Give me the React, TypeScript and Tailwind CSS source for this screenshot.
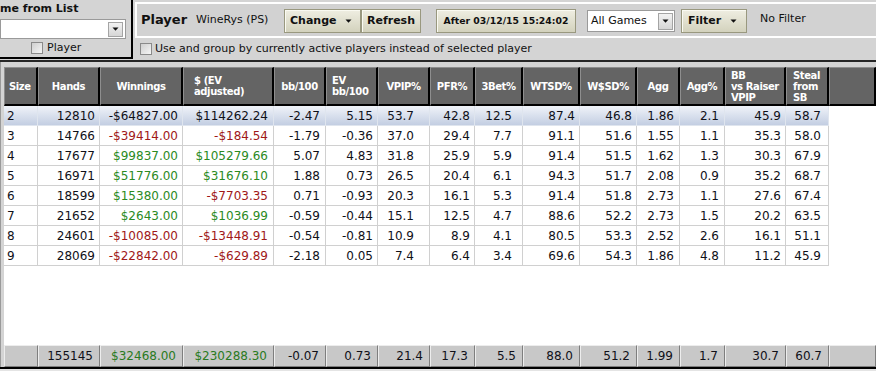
import React from "react";

const COLS =
  "grid grid-cols-[34px_62px_83px_91px_52px_52px_52px_45px_48px_57px_57px_43px_45px_61px_43px_1fr]";

type Cell = { t: string; c?: "r" | "g" };

const rows: string[][] = [
  ["2", "12810", "-$64827.00", "$114262.24", "-2.47", "5.15", "53.7", "42.8", "12.5", "87.4", "46.8", "1.86", "2.1", "45.9", "58.7"],
  ["3", "14766", "-$39414.00", "-$184.54", "-1.79", "-0.36", "37.0", "29.4", "7.7", "91.1", "51.6", "1.55", "1.1", "35.3", "58.0"],
  ["4", "17677", "$99837.00", "$105279.66", "5.07", "4.83", "31.8", "25.9", "5.9", "91.4", "51.5", "1.62", "1.3", "30.3", "67.9"],
  ["5", "16971", "$51776.00", "$31676.10", "1.88", "0.73", "26.5", "20.4", "6.1", "94.3", "51.7", "2.08", "0.9", "35.2", "68.7"],
  ["6", "18599", "$15380.00", "-$7703.35", "0.71", "-0.93", "20.3", "16.1", "5.3", "91.4", "51.8", "2.73", "1.1", "27.6", "67.4"],
  ["7", "21652", "$2643.00", "$1036.99", "-0.59", "-0.44", "15.1", "12.5", "4.7", "88.6", "52.2", "2.73", "1.5", "20.2", "63.5"],
  ["8", "24601", "-$10085.00", "-$13448.91", "-0.54", "-0.81", "10.9", "8.9", "4.1", "80.5", "53.3", "2.52", "2.6", "16.1", "51.1"],
  ["9", "28069", "-$22842.00", "-$629.89", "-2.18", "0.05", "7.4", "6.4", "3.4", "69.6", "54.3", "1.86", "4.8", "11.2", "45.9"],
];

const footer = ["", "155145", "$32468.00", "$230288.30", "-0.07", "0.73", "21.4", "17.3", "5.5", "88.0", "51.2", "1.99", "1.7", "30.7", "60.7"];

// right padding per data column
const dataPad = [
  "pl-[3px] justify-start",
  "pr-[4px] justify-end",
  "pr-[4px] justify-end",
  "pr-[5px] justify-end",
  "pr-[5px] justify-end",
  "pr-[4px] justify-end",
  "pr-[15px] justify-end",
  "pr-[4px] justify-end",
  "pr-[10px] justify-end",
  "pr-[4px] justify-end",
  "pr-[4px] justify-end",
  "pr-[5px] justify-end",
  "pr-[5px] justify-end",
  "pr-[4px] justify-end",
  "pr-[7px] justify-end",
];

function moneyColor(s: string, col: number): string {
  if (col !== 2 && col !== 3) return "text-[#101018]";
  return s.startsWith("-") ? "text-[#a01818]" : "text-[#2b8a1e]";
}

function Arrow() {
  return (
    <svg width="7" height="4" viewBox="0 0 7 4" className="block">
      <path d="M0.5 0.5h6L3.5 3.8z" fill="#111" />
    </svg>
  );
}

function Check() {
  return (
    <span className="inline-block w-[12px] h-[12px] border border-[#8a8a8a] bg-gradient-to-br from-[#cfcfcf] to-[#f6f6f6] shrink-0" />
  );
}

function Btn({ w, h, children, className = "" }: { w: string; h: string; children: React.ReactNode; className?: string }) {
  return (
    <div
      className={`${w} ${h} flex items-center border border-[#99987f] bg-gradient-to-b from-[#efeee2] to-[#d3d2bd] shadow-[inset_1px_1px_0_#fafaf2] text-[#111] font-bold ${className}`}
    >
      {children}
    </div>
  );
}

const headers: React.ReactNode[] = [
  "Size",
  "Hands",
  "Winnings",
  <>$ (EV<br />adjusted)</>,
  "bb/100",
  <>EV<br />bb/100</>,
  "VPIP%",
  "PFR%",
  "3Bet%",
  "WTSD%",
  "W$SD%",
  "Agg",
  "Agg%",
  <>BB<br />vs Raiser<br />VPIP</>,
  <>Steal<br />from<br />SB</>,
  "",
];

const headerAlign = [
  "justify-start pl-[4px]",
  "justify-center",
  "justify-center",
  "justify-start pl-[10px]",
  "justify-center",
  "justify-start pl-[5px]",
  "justify-center",
  "justify-center",
  "justify-center",
  "justify-center",
  "justify-center",
  "justify-center",
  "justify-center",
  "justify-start pl-[5px]",
  "justify-start pl-[6px]",
  "justify-center",
];

export default function App() {
  return (
    <div className="w-[876px] h-[371px] overflow-hidden bg-[#d4d4d4] [font-family:'DejaVu_Sans',Verdana,sans-serif] text-[#111] flex flex-col">
      {/* Top area */}
      <div className="h-[60px] flex shrink-0">
        {/* left panel */}
        <div className="w-[133px] h-[59px] border-r-2 border-b-2 border-black flex flex-col">
          <div className="h-[18px] pt-[2px] text-[11px] font-bold leading-[14px] whitespace-nowrap">me from List</div>
          <div className="h-[20px] w-[126px] mt-[1px] bg-white border border-[#9a9a9a] flex items-center justify-end pr-[2px]">
            <div className="w-[15px] h-[15px] bg-gradient-to-b from-[#f2f2f2] to-[#d6d6d6] border border-[#a4a4a4] flex items-center justify-center">
              <Arrow />
            </div>
          </div>
          <div className="flex-1 flex items-center pl-[31px] gap-[4px] text-[11px]">
            <Check />
            <span>Player</span>
          </div>
        </div>
        {/* right area */}
        <div className="flex-1 flex flex-col">
          <div className="mt-[2px] ml-[2px] h-[36px] border-t-2 border-l-2 border-b-2 border-white bg-[#d2d2d2] flex items-center pl-[4px] text-[11px]">
            <div className="w-[55px] text-[13px] font-bold">Player</div>
            <div className="w-[88px] whitespace-nowrap">WineRys (PS)</div>
            <Btn w="w-[77px]" h="h-[24px]" className="pl-[5px] pr-[8px] justify-between mt-[2px]">
              <span>Change</span>
              <Arrow />
            </Btn>
            <Btn w="w-[60px]" h="h-[24px]" className="justify-center mt-[2px]">
              <span>Refresh</span>
            </Btn>
            <Btn w="w-[140px]" h="h-[24px]" className="justify-center ml-[15px] text-[9.3px] mt-[2px]">
              <span>After 03/12/15 15:24:02</span>
            </Btn>
            <div className="ml-[11px] w-[88px] h-[22px] mt-[2px] bg-white border border-[#9a9a9a] flex items-center justify-between pl-[3px] pr-[1px]">
              <span>All Games</span>
              <div className="w-[15px] h-[17px] bg-gradient-to-b from-[#f2f2f2] to-[#d6d6d6] border border-[#a4a4a4] flex items-center justify-center">
                <Arrow />
              </div>
            </div>
            <Btn w="w-[66px]" h="h-[24px]" className="ml-[6px] pl-[6px] pr-[9px] justify-between mt-[2px]">
              <span>Filter</span>
              <Arrow />
            </Btn>
            <div className="ml-[13px] mb-[1px]">No Filter</div>
          </div>
          <div className="flex-1 flex items-center pl-[7px] gap-[3px] text-[11px]">
            <Check />
            <span>Use and group by currently active players instead of selected player</span>
          </div>
        </div>
      </div>
      <div className="h-[2px] bg-[#262626] shrink-0" />

      {/* Table */}
      <div className="flex-1 flex flex-col border-l border-[#9a9a9a] pl-[3px] pt-[5px] bg-[#d4d4d4]">
        {/* header */}
        <div className={`${COLS} h-[39px] shrink-0 bg-[#646464]`}>
          {headers.map((h, i) => (
            <div
              key={i}
              className={`flex items-center ${headerAlign[i]} border-t border-l border-[#8e8e8e] border-r-2 border-r-black border-b-2 border-b-black text-white font-bold text-[10px] leading-[11px] tracking-[-0.4px]`}
            >
              <div className="text-left whitespace-nowrap">{h}</div>
            </div>
          ))}
        </div>
        {/* body */}
        <div className="flex-1 bg-white flex flex-col">
          {rows.map((r, ri) => {
            const sel = ri === 0;
            return (
              <div key={ri} className={`${COLS} h-[20px] text-[12px]`}>
                {r.map((v, ci) => (
                  <div
                    key={ci}
                    className={`flex items-center ${dataPad[ci]} border-r border-b ${
                      sel
                        ? "bg-gradient-to-b from-[#f0f3f9] to-[#c3cee2] border-[#dfe5ee] text-[#101018]"
                        : `border-[#d0d0d0] ${moneyColor(v, ci)}`
                    }`}
                  >
                    {v}
                  </div>
                ))}
                <div className="bg-white" />
              </div>
            );
          })}
        </div>
        {/* footer */}
        <div className={`${COLS} h-[22px] shrink-0 bg-[#c8c8c8] text-[12px]`}>
          {[...footer, ""].map((v, ci) => (
            <div
              key={ci}
              className={`flex items-center justify-end pr-[6px] border-t border-l border-[#ededed] border-r border-b border-r-[#7e7e7e] border-b-[#7e7e7e] ${
                ci === 2 || ci === 3 ? "text-[#2a7a22]" : "text-[#101018]"
              }`}
            >
              {v}
            </div>
          ))}
        </div>
        <div className="h-[2px] bg-black shrink-0 -ml-[4px]" />
        <div className="h-[2px] bg-[#e4e4e4] shrink-0 -ml-[4px]" />
      </div>
    </div>
  );
}
